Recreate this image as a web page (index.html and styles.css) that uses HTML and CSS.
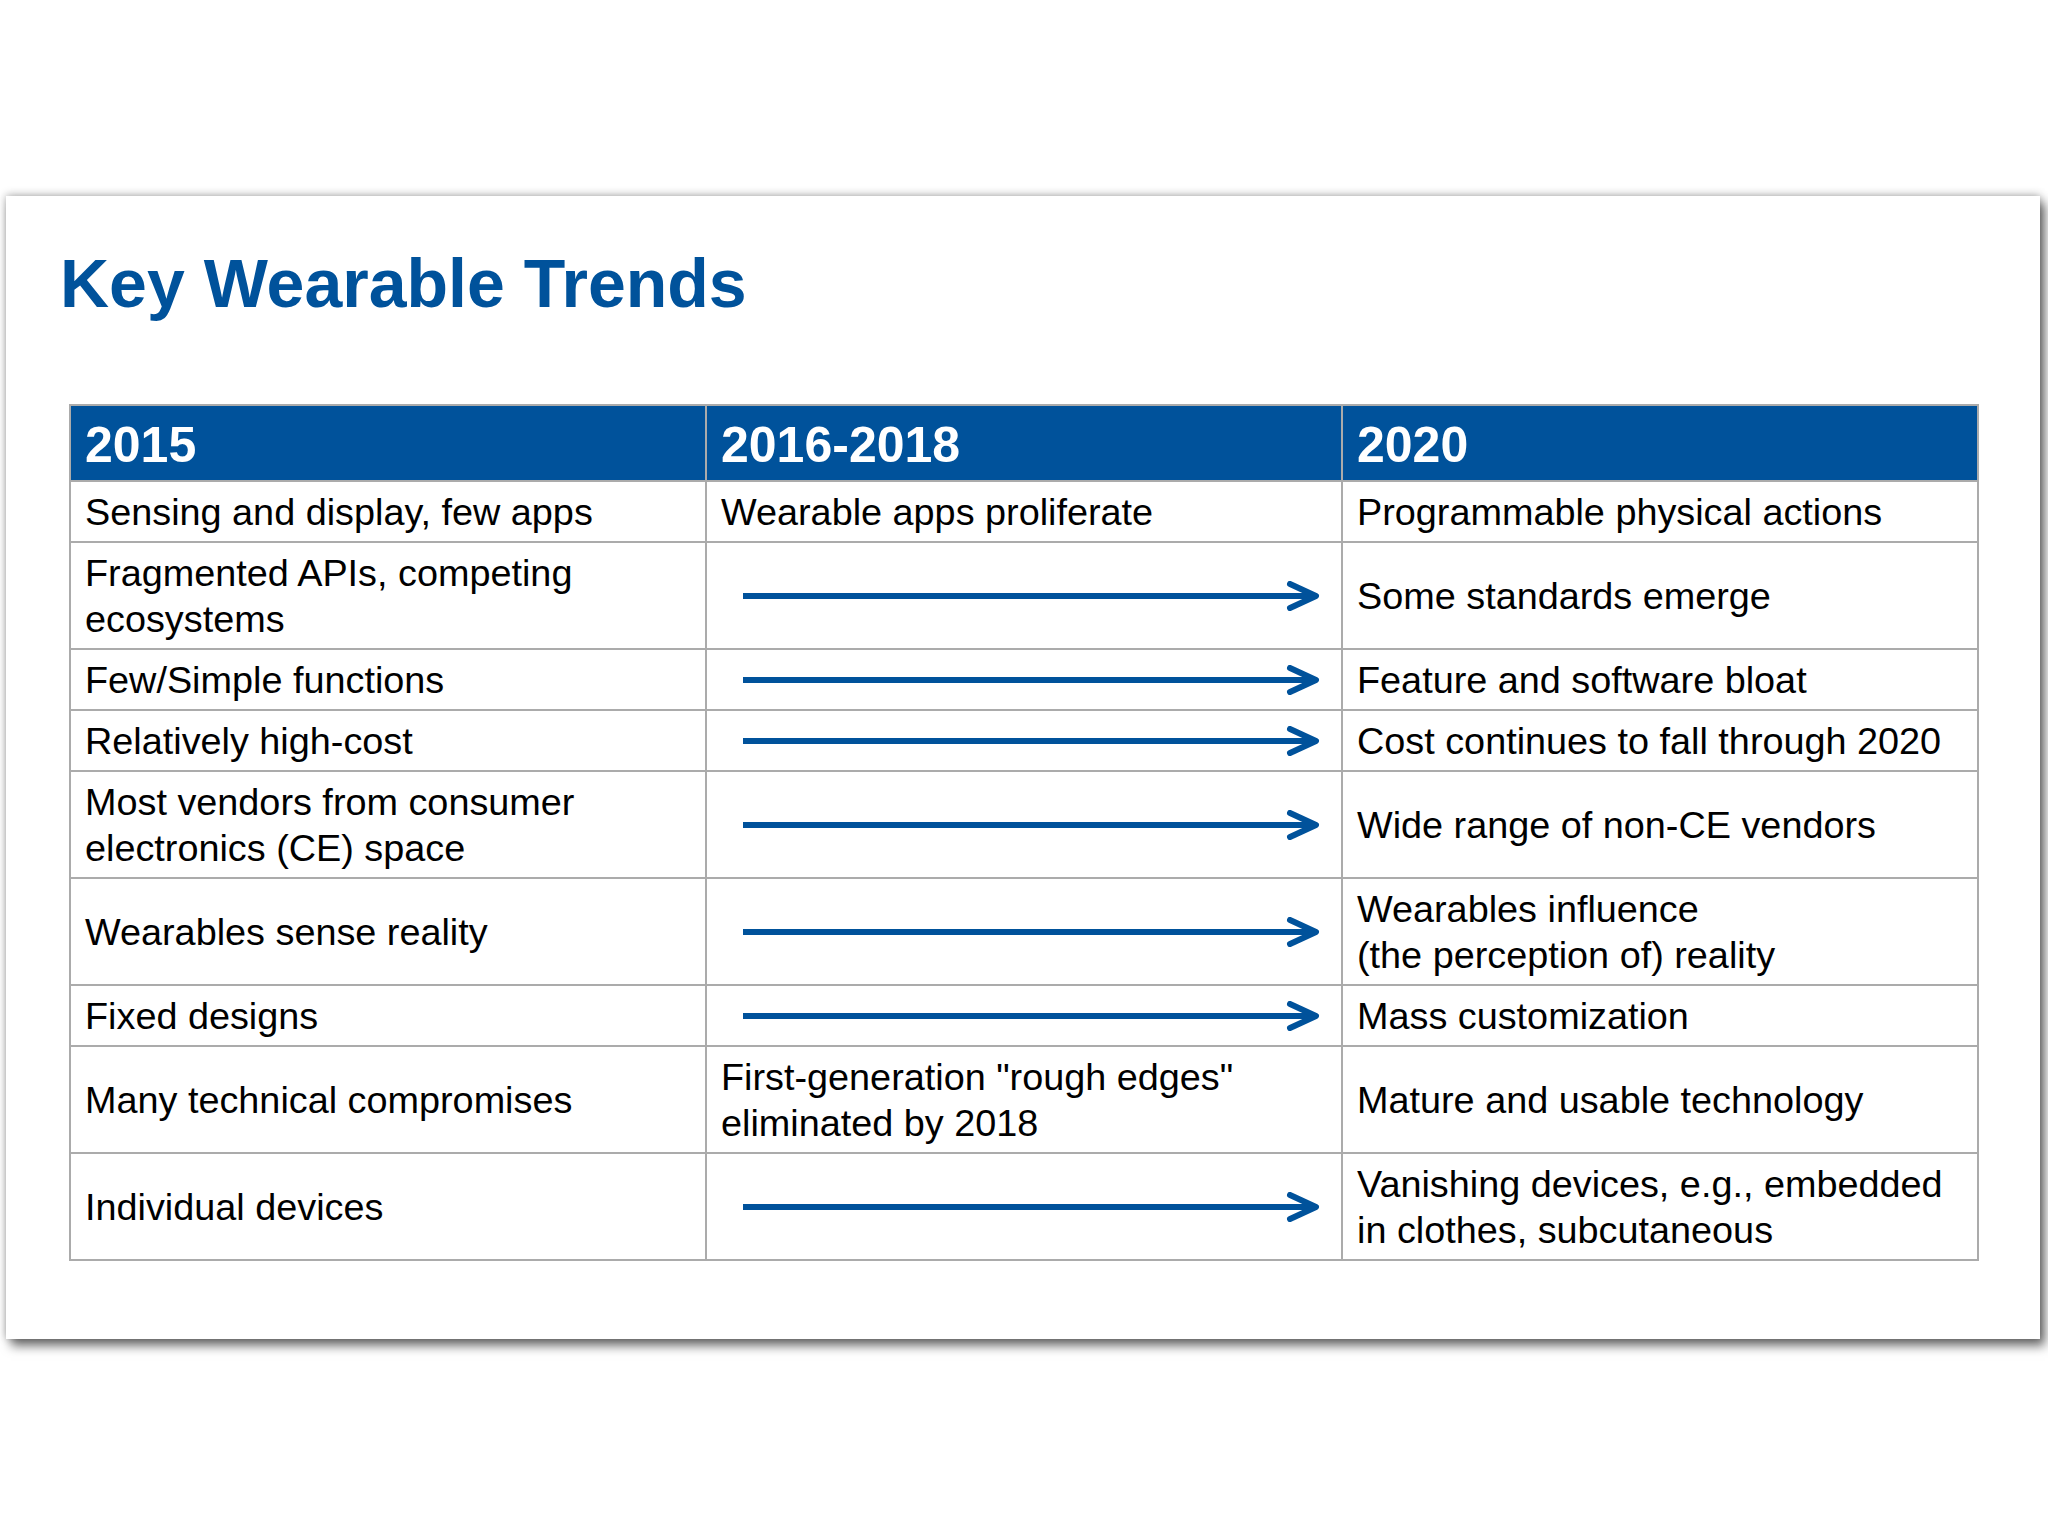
FILE: index.html
```html
<!DOCTYPE html>
<html lang="en">
<head>
<meta charset="utf-8">
<title>Key Wearable Trends</title>
<link rel="stylesheet" href="styles.css">
</head>
<body>
<div class="card">
  <h1 class="title">Key Wearable Trends</h1>
  <table class="trends">
    <colgroup><col class="c"><col class="c"><col class="c"></colgroup>
    <thead>
      <tr><th>2015</th><th>2016-2018</th><th>2020</th></tr>
    </thead>
    <tbody>
      <tr><td>Sensing and display, few apps</td><td>Wearable apps proliferate</td><td>Programmable physical actions</td></tr>
      <tr><td>Fragmented APIs, competing<br>ecosystems</td><td class="arrow-cell"><svg class="arrow" viewBox="0 0 580 30" width="580" height="30"><line x1="0" y1="15" x2="570" y2="15"/><polyline points="547,3 573,15 547,27"/></svg></td><td>Some standards emerge</td></tr>
      <tr><td>Few/Simple functions</td><td class="arrow-cell"><svg class="arrow" viewBox="0 0 580 30" width="580" height="30"><line x1="0" y1="15" x2="570" y2="15"/><polyline points="547,3 573,15 547,27"/></svg></td><td>Feature and software bloat</td></tr>
      <tr><td>Relatively high-cost</td><td class="arrow-cell"><svg class="arrow" viewBox="0 0 580 30" width="580" height="30"><line x1="0" y1="15" x2="570" y2="15"/><polyline points="547,3 573,15 547,27"/></svg></td><td>Cost continues to fall through 2020</td></tr>
      <tr><td>Most vendors from consumer<br>electronics (CE) space</td><td class="arrow-cell"><svg class="arrow" viewBox="0 0 580 30" width="580" height="30"><line x1="0" y1="15" x2="570" y2="15"/><polyline points="547,3 573,15 547,27"/></svg></td><td>Wide range of non-CE vendors</td></tr>
      <tr><td>Wearables sense reality</td><td class="arrow-cell"><svg class="arrow" viewBox="0 0 580 30" width="580" height="30"><line x1="0" y1="15" x2="570" y2="15"/><polyline points="547,3 573,15 547,27"/></svg></td><td>Wearables influence<br>(the perception of) reality</td></tr>
      <tr><td>Fixed designs</td><td class="arrow-cell"><svg class="arrow" viewBox="0 0 580 30" width="580" height="30"><line x1="0" y1="15" x2="570" y2="15"/><polyline points="547,3 573,15 547,27"/></svg></td><td>Mass customization</td></tr>
      <tr><td>Many technical compromises</td><td>First-generation "rough edges"<br>eliminated by 2018</td><td>Mature and usable technology</td></tr>
      <tr><td>Individual devices</td><td class="arrow-cell"><svg class="arrow" viewBox="0 0 580 30" width="580" height="30"><line x1="0" y1="15" x2="570" y2="15"/><polyline points="547,3 573,15 547,27"/></svg></td><td>Vanishing devices, e.g., embedded<br>in clothes, subcutaneous</td></tr>
    </tbody>
  </table>
</div>
</body>
</html>
```

FILE: styles.css
```css
html, body {
  margin: 0;
  padding: 0;
  background: #ffffff;
}

body {
  font-family: "Liberation Sans", Arial, Helvetica, sans-serif;
  color: #000000;
  min-height: 1536px;
}

.card {
  box-sizing: border-box;
  width: 2034px;
  height: 1143px;
  margin: 196px 0 120px 6px;
  padding-top: 47px;
  background: #ffffff;
  box-shadow: 0 -1px 8px rgba(0, 0, 0, 0.3), 5px 7px 10px rgba(0, 0, 0, 0.55);
}

.title {
  margin: 0 0 0 54px;
  font-size: 68px;
  line-height: 80px;
  font-weight: bold;
  color: #00529b;
}

.trends {
  margin: 81px 0 0 63px;
  width: 1908px;
  table-layout: fixed;
  border-collapse: collapse;
}

.trends .c {
  width: 636px;
}

.trends th,
.trends td {
  border: 2px solid #ababab;
  text-align: left;
  vertical-align: middle;
}

.trends th {
  background: #00529b;
  color: #ffffff;
  font-size: 50px;
  font-weight: bold;
  line-height: 58px;
  padding: 10px 13px 6px 14px;
}

.trends td {
  font-size: 37.8px;
  line-height: 46px;
  padding: 7px 13px 6px 14px;
}

.arrow {
  display: block;
  margin-left: 22px;
  fill: none;
  stroke: #00529b;
  stroke-width: 6;
  stroke-linecap: round;
  stroke-linejoin: round;
}

.arrow line {
  stroke-linecap: butt;
}
```
